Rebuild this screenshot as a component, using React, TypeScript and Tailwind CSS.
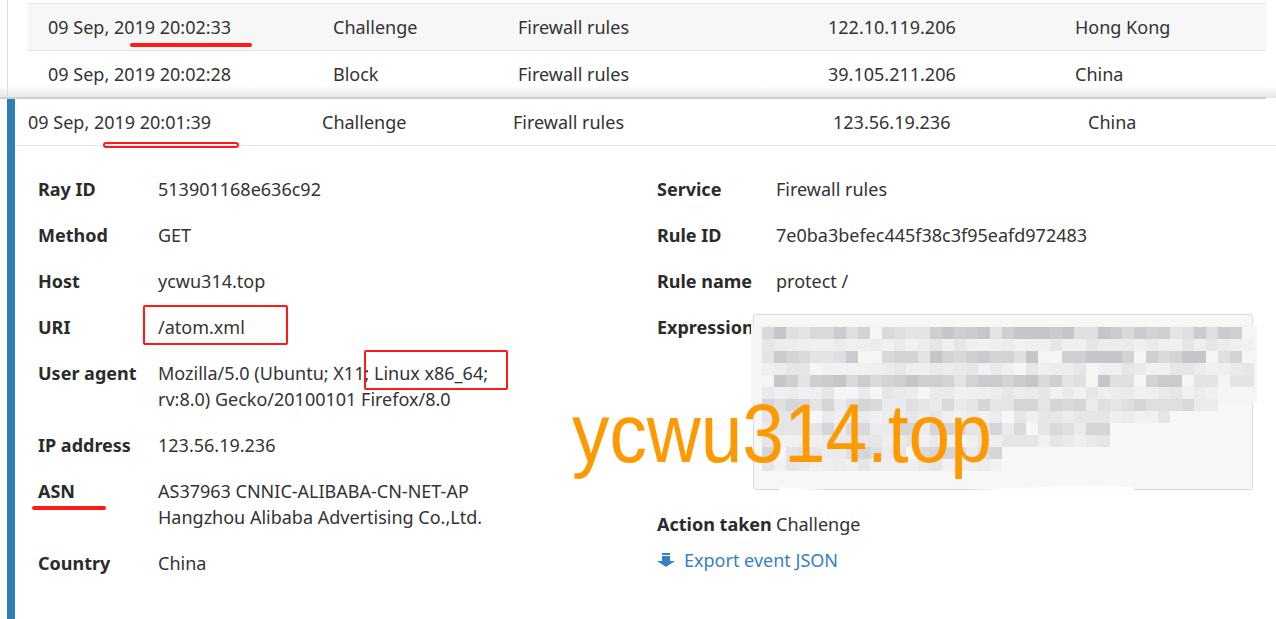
import React from "react";

type Cell = { x: number; y: number; c: string };

function buildMosaic(): Cell[] {
  let s = 1234567;
  const rnd = () => {
    s = (s * 1103515245 + 12345) % 2147483648;
    return s / 2147483648;
  };
  const dark = ["#cbcbcf", "#d3d3d6", "#c6c6ca", "#d9d9dc", "#dfdfe2", "#cfcfd2", "#e4e4e7"];
  const mid = ["#d9d9dc", "#dfdfe2", "#d5d5d8", "#e5e5e8", "#ebebed"];
  const light = ["#eaeaec", "#efeff1", "#e6e6e8", "#f1f1f3", "#ececed"];
  const rows: [number, number, string][] = [
    [12, 480, "d"],
    [24, 492, "l"],
    [36, 492, "d"],
    [48, 492, "l"],
    [60, 492, "d"],
    [72, 455, "l"],
    [84, 455, "m"],
    [96, 415, "l"],
    [108, 350, "m"],
    [120, 350, "l"],
    [132, 240, "m"],
    [144, 240, "l"],
  ];
  const out: Cell[] = [];
  rows.forEach(([y, ext, t]) => {
    for (let x = 8; x < ext; x += 12) {
      const r = rnd();
      if (r < 0.06) continue;
      const pal = t === "d" ? dark : t === "m" ? mid : light;
      out.push({ x, y, c: pal[Math.floor(rnd() * pal.length)] });
    }
  });
  return out;
}

const mosaic = buildMosaic();

function TopRow({
  date,
  action,
  service,
  ip,
  country,
}: {
  date: string;
  action: string;
  service: string;
  ip: string;
  country: string;
}) {
  return (
    <>
      <div className="w-[305px] pl-[20px]">{date}</div>
      <div className="w-[185px]">{action}</div>
      <div className="w-[310px]">{service}</div>
      <div className="w-[247px]">{ip}</div>
      <div>{country}</div>
    </>
  );
}

function Item({
  label,
  children,
  w = "w-[120px]",
}: {
  label: string;
  children: React.ReactNode;
  w?: string;
}) {
  return (
    <div className="flex mb-[20px]">
      <div className={`${w} shrink-0 font-bold text-[#2b2b2b]`}>{label}</div>
      <div>{children}</div>
    </div>
  );
}

export default function App() {
  return (
    <div className="relative w-[1276px] h-[619px] overflow-hidden bg-white text-[#333] font-['Noto_Sans',sans-serif] text-[18px] leading-[26px]">
      {/* previous rows */}
      <div className="ml-[7px] h-[99px] border-l border-[#dcdcdc] pl-[20px] pr-[10px] pt-[3px]">
        <div className="h-[48px] bg-[#f7f7f7] border-y border-[#e3e3e3] flex items-center">
          <TopRow
            date="09 Sep, 2019 20:02:33"
            action="Challenge"
            service="Firewall rules"
            ip="122.10.119.206"
            country="Hong Kong"
          />
        </div>
        <div className="h-[47px] flex items-center pb-[2px]">
          <TopRow
            date="09 Sep, 2019 20:02:28"
            action="Block"
            service="Firewall rules"
            ip="39.105.211.206"
            country="China"
          />
        </div>
      </div>
      {/* shadow between screenshots */}
      <div className="absolute left-0 top-[86px] w-[1276px] h-[12px] bg-gradient-to-b from-[rgba(230,230,230,0)] to-[#e4e4e4]" />
      <div className="absolute left-0 top-[97px] w-[1266px] h-[2px] bg-[#cfcfcf]" />

      {/* expanded row */}
      <div className="flex h-[520px]">
        <div className="ml-[7px] w-[8px] shrink-0 bg-[#2e7db5]" />
        <div className="flex-1">
          <div className="h-[47px] border-b border-[#e5e5e5] pl-[13px] flex items-center">
            <div className="w-[294px]">09 Sep, 2019 20:01:39</div>
            <div className="w-[191px]">Challenge</div>
            <div className="w-[320px]">Firewall rules</div>
            <div className="w-[255px]">123.56.19.236</div>
            <div>China</div>
          </div>

          <div className="grid grid-cols-[619px_1fr] pl-[23px] pt-[30px]">
            <div>
              <Item label="Ray ID">513901168e636c92</Item>
              <Item label="Method">GET</Item>
              <Item label="Host">ycwu314.top</Item>
              <Item label="URI">/atom.xml</Item>
              <Item label="User agent">
                Mozilla/5.0 (Ubuntu; X11; Linux x86_64;
                <br />
                rv:8.0) Gecko/20100101 Firefox/8.0
              </Item>
              <Item label="IP address">123.56.19.236</Item>
              <Item label="ASN">
                AS37963 CNNIC-ALIBABA-CN-NET-AP
                <br />
                Hangzhou Alibaba Advertising Co.,Ltd.
              </Item>
              <Item label="Country">China</Item>
            </div>
            <div>
              <Item label="Service" w="w-[119px]">Firewall rules</Item>
              <Item label="Rule ID" w="w-[119px]">7e0ba3befec445f38c3f95eafd972483</Item>
              <Item label="Rule name" w="w-[119px]">protect /</Item>
              <div className="flex">
                <div className="w-[96px] shrink-0 font-bold text-[#2b2b2b] whitespace-nowrap">Expression</div>
                <div className="relative w-[500px] h-[176px] rounded-[3px] border border-[#dadada] bg-[#f7f7f7]">
                  <svg
                    className="absolute -left-[4px] -top-[1px]"
                    width="508"
                    height="176"
                    viewBox="-4 -1 508 176"
                  >
                    <rect x="-3" y="10" width="506" height="78" fill="#f5f5f6" />
                    {mosaic.map((m, i) => (
                      <rect key={i} x={m.x} y={m.y} width="12" height="12" fill={m.c} />
                    ))}
                    <path d="M25 172 Q120 180 240 174 T380 173 L380 176 L25 176 Z" fill="#ffffff" opacity="0.9" />
                  </svg>
                </div>
              </div>
              <div className="flex mt-[21px]">
                <div className="w-[119px] shrink-0 font-bold text-[#2b2b2b]">Action taken</div>
                <div>Challenge</div>
              </div>
              <div className="flex items-center mt-[10px] text-[#3581c1]">
                <svg width="20" height="14" viewBox="0 0 20 14" className="mr-[8px] -ml-[1px]">
                  <rect x="6" y="0" width="8" height="2" fill="#3581c1" />
                  <rect x="6" y="3" width="8" height="5" fill="#3581c1" />
                  <polygon points="1,8 19,8 10,14" fill="#3581c1" />
                </svg>
                <span>Export event JSON</span>
              </div>
            </div>
          </div>
        </div>
      </div>

      {/* annotations */}
      <div className="absolute left-[130px] top-[43px] w-[122px] h-[4px] rounded-full bg-[#ff1a1a]" />
      <div className="absolute left-[103px] top-[142px] w-[136px] h-[6px] rounded-full border-2 border-[#ff1a1a]" />
      <div className="absolute left-[143px] top-[305px] w-[145px] h-[40px] rounded-[2px] border-2 border-[#ff1a1a]" />
      <div className="absolute left-[364px] top-[350px] w-[144px] h-[40px] rounded-[2px] border-2 border-[#ff1a1a]" />
      <div className="absolute left-[32px] top-[506px] w-[74px] h-[4px] rounded-full bg-[#ff1a1a]" />

      {/* watermark */}
      <div className="absolute left-[572px] top-[391px] origin-left scale-x-[0.89] font-['Liberation_Sans',Arial,sans-serif] text-[84px] leading-none text-[#ff9900] whitespace-nowrap">
        ycwu314.top
      </div>
    </div>
  );
}
